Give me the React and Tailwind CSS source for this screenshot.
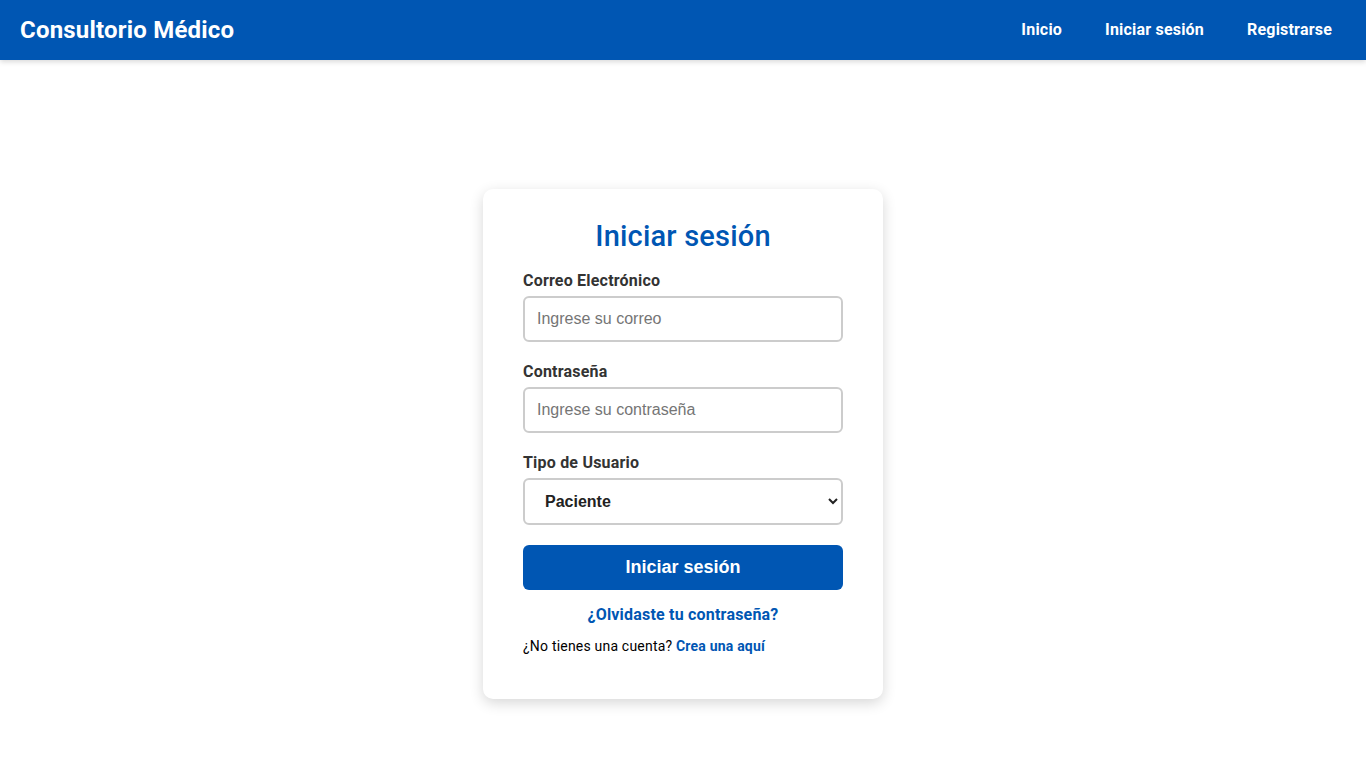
import React, { useState } from 'react';

const Navbar = () => {
  const links = ['Inicio', 'Iniciar sesión', 'Registrarse'];

  return (
    <header className="h-[60px] shrink-0 bg-[#0056b3] flex items-center justify-between pl-5 pr-[34px] shadow-[0_2px_5px_rgba(0,0,0,0.15)] relative z-10">
      <h1 className="text-[24px] font-bold text-white">Consultorio Médico</h1>
      <nav className="flex items-center gap-[43px]">
        {links.map(link => (
          <a key={link} href="#" className="text-white text-[16px] font-bold">
            {link}
          </a>
        ))}
      </nav>
    </header>
  );
};

const LoginCard = () => {
  const [email, setEmail] = useState('');
  const [password, setPassword] = useState('');
  const [userType, setUserType] = useState('paciente');

  return (
    <div className="w-[400px] bg-white rounded-[10px] shadow-[0_4px_14px_rgba(0,0,0,0.16)] px-10 pt-[30px] pb-[44px]">
      <h2 className="text-center text-[29px] leading-[34px] font-medium text-[#0056b3] mb-[18px]">Iniciar sesión</h2>

      <form onSubmit={e => e.preventDefault()}>
        <label className="block text-[16px] leading-[19px] font-bold text-[#333] mb-[6px]">Correo Electrónico</label>
        <input
          type="email"
          value={email}
          onChange={e => setEmail(e.target.value)}
          placeholder="Ingrese su correo"
          className="block w-full h-[46px] border-2 border-[#ccc] rounded-[6px] px-[12px] text-[16px] tracking-normal font-['Liberation_Sans',Arial,sans-serif] placeholder:text-[#757575] mb-5"
        />

        <label className="block text-[16px] leading-[19px] font-bold text-[#333] mb-[6px]">Contraseña</label>
        <input
          type="password"
          value={password}
          onChange={e => setPassword(e.target.value)}
          placeholder="Ingrese su contraseña"
          className="block w-full h-[46px] border-2 border-[#ccc] rounded-[6px] px-[12px] text-[16px] tracking-normal font-['Liberation_Sans',Arial,sans-serif] placeholder:text-[#757575] mb-5"
        />

        <label className="block text-[16px] leading-[19px] font-bold text-[#333] mb-[6px]">Tipo de Usuario</label>
        <select
          value={userType}
          onChange={e => setUserType(e.target.value)}
          className="block w-full h-[47px] border-2 border-[#ccc] rounded-[6px] pl-[16px] pr-2 text-[16px] font-bold text-[#222] tracking-normal font-['Liberation_Sans',Arial,sans-serif] bg-white mb-5"
        >
          <option value="paciente">Paciente</option>
          <option value="medico">Médico</option>
        </select>

        <button
          type="submit"
          className="block w-full h-[45px] bg-[#0056b3] text-white rounded-[6px] text-[18px] font-bold tracking-normal font-['Liberation_Sans',Arial,sans-serif]"
        >
          Iniciar sesión
        </button>
      </form>

      <a href="#" className="block text-center mt-[15px] text-[16px] leading-[19px] font-bold text-[#0056b3]">
        ¿Olvidaste tu contraseña?
      </a>

      <p className="mt-[14px] text-[14px] leading-[17px] text-black">
        ¿No tienes una cuenta?{' '}
        <a href="#" className="font-bold text-[#0056b3]">Crea una aquí</a>
      </p>
    </div>
  );
};

export default function App() {
  return (
    <div className="h-screen overflow-y-scroll bg-white font-['Roboto',sans-serif] tracking-[0.2px] [&::-webkit-scrollbar]:w-[15px] [&::-webkit-scrollbar]:bg-[#2b2b2b] [&::-webkit-scrollbar-track]:bg-[#2b2b2b] [&::-webkit-scrollbar-thumb]:bg-[#9f9f9f] [&::-webkit-scrollbar-thumb]:rounded-full [&::-webkit-scrollbar-thumb]:border-[3px] [&::-webkit-scrollbar-thumb]:border-solid [&::-webkit-scrollbar-thumb]:border-[#2b2b2b] [&::-webkit-scrollbar-button]:h-[12px] [&::-webkit-scrollbar-button]:bg-[#2b2b2b]">
      <div className="min-h-[1085px] flex flex-col">
        <Navbar />
        <main className="flex justify-center pt-[129px] pb-[386px]">
          <LoginCard />
        </main>
      </div>
    </div>
  );
}
